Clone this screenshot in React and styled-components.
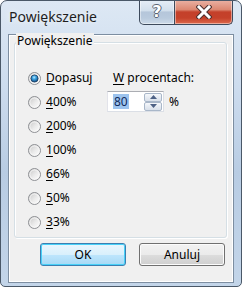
import React from 'react';
import styled, { createGlobalStyle } from 'styled-components';

const GlobalStyle = createGlobalStyle`
  html, body {
    margin: 0;
    padding: 0;
    background: #ffffff;
  }
  #root {
    width: 242px;
    height: 287px;
  }
`;

const Window = styled.div`
  width: 242px;
  height: 287px;
  box-sizing: border-box;
  border: 1px solid #4a5868;
  border-radius: 7px 7px 5px 5px;
  background: linear-gradient(to bottom, #dde8f4 0%, #cddcee 30%, #b8cce3 60%, #c3d5e9 100%);
  display: flex;
  flex-direction: column;
  font-family: "Noto Sans", "Segoe UI", sans-serif;
  overflow: hidden;
`;

const TitleBar = styled.div`
  height: 31px;
  display: flex;
  align-items: flex-start;
  justify-content: space-between;
  padding: 0 8px 0 8px;
`;

const Title = styled.div`
  font-size: 14px;
  line-height: 16px;
  color: #1e1e1e;
  margin-top: 8px;
  text-shadow: 0 0 6px rgba(255, 255, 255, 0.9);
`;

const CaptionButtons = styled.div`
  display: flex;
  margin-top: -1px;
`;

const CaptionButton = styled.div`
  height: 25px;
  width: ${({ $w }) => $w}px;
  box-sizing: border-box;
  border: 1px solid #3d4a5c;
  border-top: none;
  display: flex;
  align-items: center;
  justify-content: center;
  box-shadow: inset 0 0 0 1px rgba(255, 255, 255, 0.45);
  border-radius: ${({ $close }) => ($close ? '0 0 5px 0' : '0 0 0 5px')};
  border-left: ${({ $close }) => ($close ? 'none' : '1px solid #3d4a5c')};
  background: ${({ $close }) =>
    $close
      ? 'linear-gradient(to bottom, #eab3a5 0%, #dc8872 40%, #c4402a 50%, #c5412a 75%, #dd6a4d 100%)'
      : 'linear-gradient(to bottom, #e6eef7 0%, #d2dfec 45%, #b5c6da 50%, #b9cadd 75%, #cddbe9 100%)'};
`;

const HelpGlyph = styled.span`
  font-family: "DejaVu Sans", sans-serif;
  font-weight: bold;
  font-size: 16px;
  line-height: 16px;
  color: #ffffff;
  text-shadow: 1px 0 0 #5a6472, -1px 0 0 #5a6472, 0 1px 0 #5a6472, 0 -1px 0 #5a6472;
`;

const Client = styled.div`
  flex: 1;
  margin: 2px 7px 3px 7px;
  border: 1px solid #7d8ea1;
  background: #f0f0f0;
  box-shadow: inset 0 0 0 1px #ffffff;
  display: flex;
  flex-direction: column;
  font-size: 12px;
  color: #000;
`;

const GroupBox = styled.div`
  position: relative;
  margin: 7px 6px 0 5px;
  border: 1px solid #d5dfe5;
  border-radius: 3px;
  box-shadow: inset 1px 1px 0 #ffffff, 1px 1px 0 #ffffff;
  padding: 23px 0 3px 13px;
  display: flex;
`;

const GroupTitle = styled.span`
  position: absolute;
  top: -10px;
  left: 1px;
  padding: 0 2px 0 1px;
  background: #f0f0f0;
  line-height: 16px;
`;

const RadioColumn = styled.div`
  width: 79px;
  display: flex;
  flex-direction: column;
`;

const RadioRow = styled.div`
  height: 24px;
  display: flex;
  align-items: center;
  gap: 5px;
`;

const Label = styled.span`
  line-height: 16px;
  white-space: nowrap;
`;

const Key = styled.span`
  text-decoration: underline;
  text-underline-offset: 2px;
`;

const SideColumn = styled.div`
  display: flex;
  flex-direction: column;
`;

const SideLabel = styled.div`
  height: 24px;
  display: flex;
  align-items: center;
  padding-left: 6px;
`;

const SpinRow = styled.div`
  display: flex;
  align-items: center;
  gap: 5px;
  margin-top: 1px;
`;

const SpinBox = styled.div`
  width: 57px;
  height: 21px;
  box-sizing: border-box;
  border: 1px solid #dbdfe6;
  border-top-color: #abadb3;
  border-left-color: #e2e3ea;
  background: #ffffff;
  display: flex;
  align-items: center;
  padding-left: 5px;
`;

const SpinText = styled.span`
  background: #9cc3ee;
  color: #102a5c;
  line-height: 15px;
  padding: 0 1px;
`;

const Spinners = styled.div`
  margin-left: auto;
  margin-right: 1px;
  display: flex;
  flex-direction: column;
`;

const SpinButton = styled.div`
  width: 18px;
  height: 9px;
  box-sizing: border-box;
  border: 1px solid #a9b7c9;
  border-radius: 2px;
  background: linear-gradient(to bottom, #f6f8fb 0%, #e6ebf2 50%, #d9e0ea 100%);
  display: flex;
  align-items: center;
  justify-content: center;
`;

const Percent = styled.span`
  line-height: 16px;
`;

const ButtonRow = styled.div`
  display: flex;
  gap: 13px;
  margin: 5px 0 0 31px;
`;

const Button = styled.div`
  width: 86px;
  height: 23px;
  box-sizing: border-box;
  border-radius: 3px;
  display: flex;
  align-items: center;
  justify-content: center;
  border: 1px solid ${({ $default }) => ($default ? '#3c7fb1' : '#707070')};
  box-shadow: inset 0 0 0 1px ${({ $default }) => ($default ? '#48d1f8' : '#fcfcfc')};
  background: ${({ $default }) =>
    $default
      ? 'linear-gradient(to bottom, #eaf6fd 0%, #d9f0fc 50%, #bee6fd 51%, #a7d9f5 100%)'
      : 'linear-gradient(to bottom, #f2f2f2 0%, #ebebeb 50%, #dddddd 51%, #cfcfcf 100%)'};
`;

const Radio = ({ checked }) => (
  <svg width="13" height="13" viewBox="0 0 13 13">
    <defs>
      <linearGradient id="rfill" x1="0" y1="0" x2="1" y2="1">
        <stop offset="0" stopColor="#c4c4c4" />
        <stop offset="0.55" stopColor="#ececec" />
        <stop offset="1" stopColor="#ffffff" />
      </linearGradient>
      <radialGradient id="rdot" cx="0.45" cy="0.35" r="0.7">
        <stop offset="0" stopColor="#b9e9ff" />
        <stop offset="0.35" stopColor="#3fa6e4" />
        <stop offset="1" stopColor="#0b3f73" />
      </radialGradient>
    </defs>
    <circle cx="6.5" cy="6.5" r="6" fill="url(#rfill)" stroke="#8e9094" strokeWidth="1" />
    <circle cx="6.5" cy="6.5" r="4.6" fill="none" stroke="#f8f8f8" strokeWidth="0.8" />
    {checked && <circle cx="6.5" cy="6.5" r="3.6" fill="url(#rdot)" stroke="#17385e" strokeWidth="0.8" />}
  </svg>
);

const Arrow = ({ up }) => (
  <svg width="7" height="4" viewBox="0 0 7 4">
    <path d={up ? 'M0 4 L3.5 0 L7 4 Z' : 'M0 0 L3.5 4 L7 0 Z'} fill="#4d6185" />
  </svg>
);

const CloseGlyph = () => (
  <svg width="16" height="14" viewBox="0 0 16 14">
    <path d="M3 2 L13 12 M13 2 L3 12" stroke="#4b3030" strokeWidth="5" strokeLinecap="square" />
    <path d="M3 2 L13 12 M13 2 L3 12" stroke="#ffffff" strokeWidth="3" strokeLinecap="square" />
  </svg>
);

const options = [
  { key: 'D', rest: 'opasuj', checked: true },
  { key: '4', rest: '00%' },
  { key: '2', rest: '00%' },
  { key: '1', rest: '00%' },
  { key: '6', rest: '6%' },
  { key: '5', rest: '0%' },
  { key: '3', rest: '3%' },
];

export default function App() {
  return (
    <>
      <GlobalStyle />
      <Window>
        <TitleBar>
          <Title>Powiększenie</Title>
          <CaptionButtons>
            <CaptionButton $w={36}>
              <HelpGlyph>?</HelpGlyph>
            </CaptionButton>
            <CaptionButton $w={58} $close>
              <CloseGlyph />
            </CaptionButton>
          </CaptionButtons>
        </TitleBar>
        <Client>
          <GroupBox>
            <GroupTitle>Powiększenie</GroupTitle>
            <RadioColumn>
              {options.map((o) => (
                <RadioRow key={o.key}>
                  <Radio checked={o.checked} />
                  <Label>
                    <Key>{o.key}</Key>
                    {o.rest}
                  </Label>
                </RadioRow>
              ))}
            </RadioColumn>
            <SideColumn>
              <SideLabel>
                <Label>
                  <Key>W</Key> procentach:
                </Label>
              </SideLabel>
              <SpinRow>
                <SpinBox>
                  <SpinText>80</SpinText>
                  <Spinners>
                    <SpinButton>
                      <Arrow up />
                    </SpinButton>
                    <SpinButton>
                      <Arrow />
                    </SpinButton>
                  </Spinners>
                </SpinBox>
                <Percent>%</Percent>
              </SpinRow>
            </SideColumn>
          </GroupBox>
          <ButtonRow>
            <Button $default>OK</Button>
            <Button>Anuluj</Button>
          </ButtonRow>
        </Client>
      </Window>
    </>
  );
}
